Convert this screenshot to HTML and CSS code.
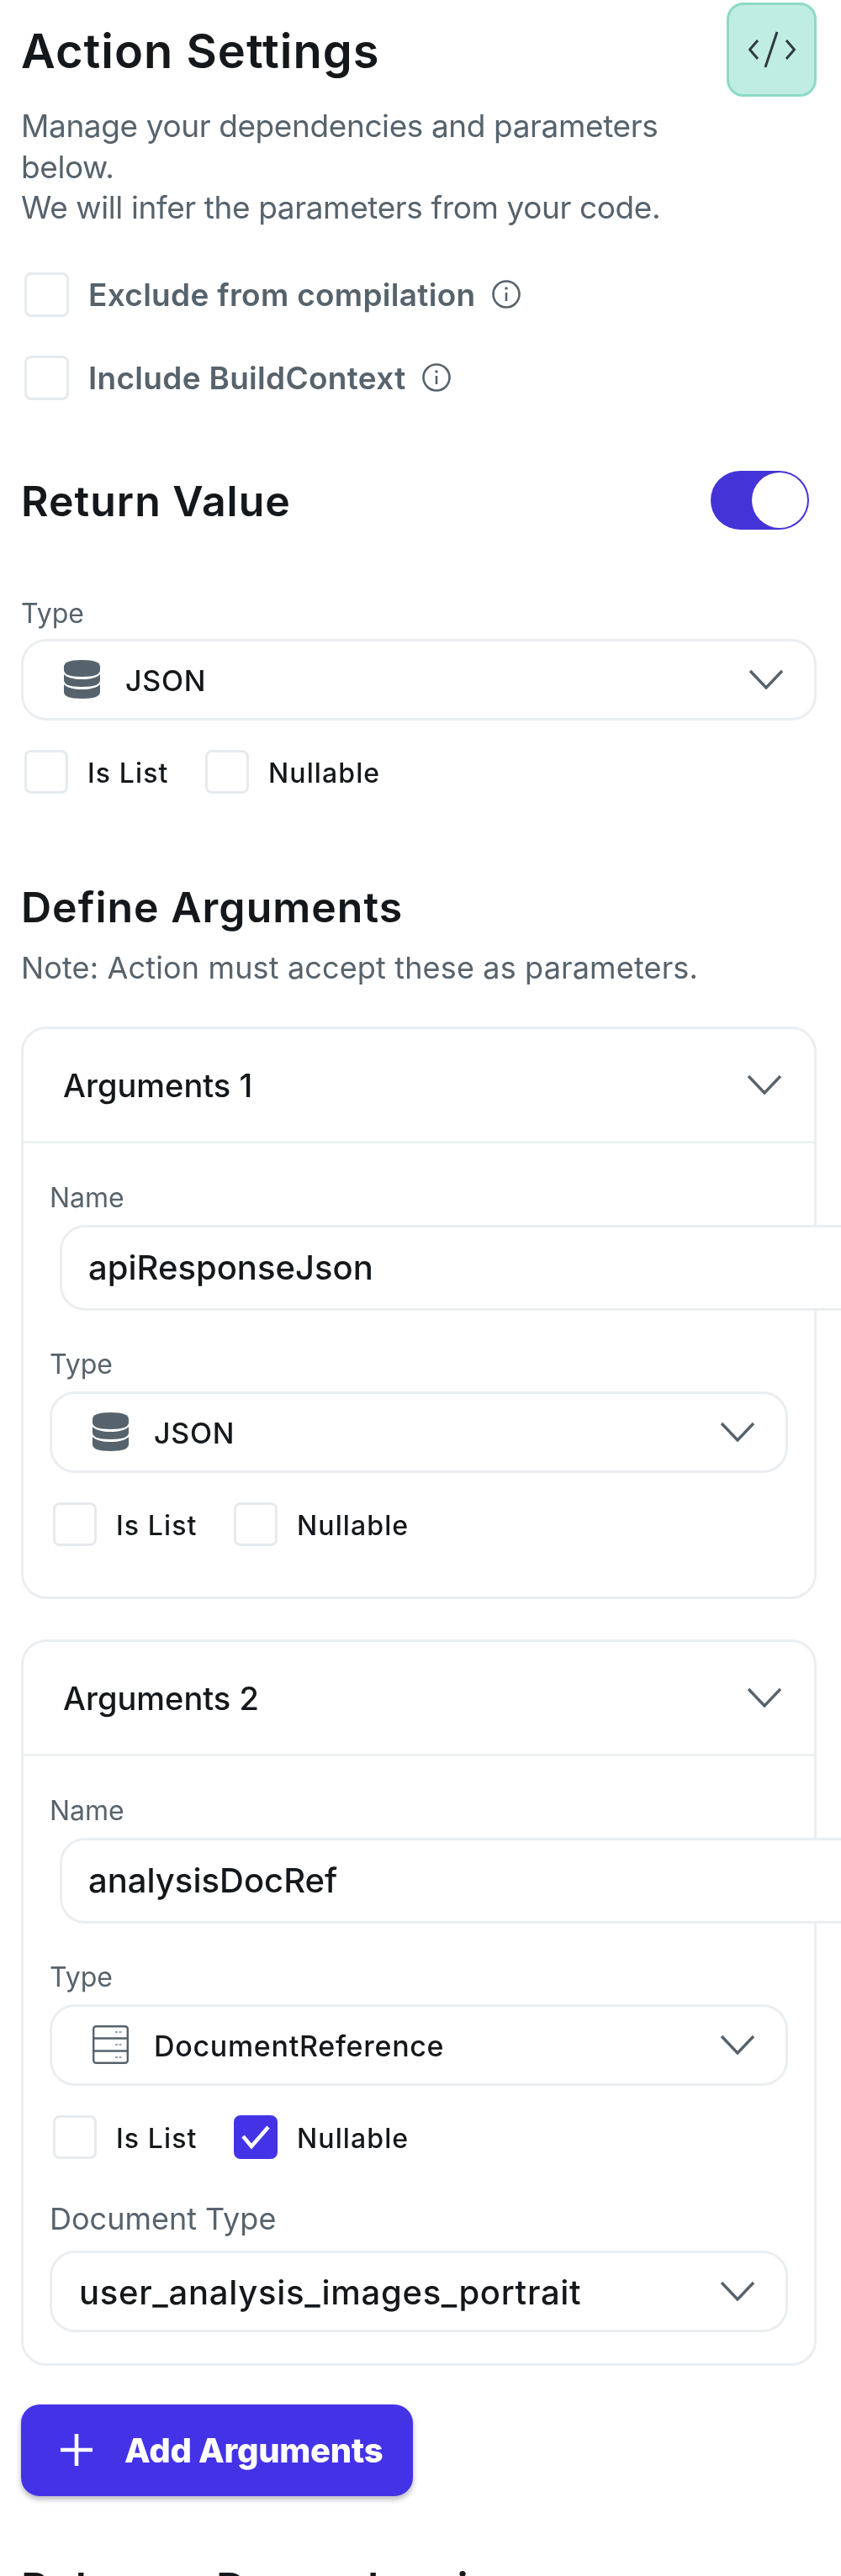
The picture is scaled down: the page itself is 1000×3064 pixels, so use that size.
FILE: index.html
```html
<!DOCTYPE html>
<html lang="en">
<head>
<meta charset="utf-8">
<title>Action Settings</title>
<link rel="stylesheet" href="styles.css">
</head>
<body>
<svg class="defs" width="0" height="0" aria-hidden="true">
  <symbol id="chev" viewBox="0 0 42 24"><polyline points="2,2 21,22 40,2" fill="none" stroke="#57636C" stroke-width="3.4"/></symbol>
  <symbol id="db" viewBox="0 0 43 46">
    <path d="M0 8C0 3 6 0 21.500 0S43 3 43 8V12C43 17 37 20 21.500 20S0 17 0 12Z" fill="#57636C"/>
    <path d="M0 17C4 21 12 23 21.500 23S39 21 43 17V24C43 29 37 32 21.500 32S0 29 0 24Z" fill="#57636C"/>
    <path d="M0 29C4 33 12 35 21.500 35S39 33 43 29V38C43 43 37 46 21.500 46S0 43 0 38Z" fill="#57636C"/>
  </symbol>
  <symbol id="info" viewBox="0 0 36 36">
    <circle cx="18" cy="18" r="15.500" fill="none" stroke="#57636C" stroke-width="2.600"/>
    <path d="M18 16V26" stroke="#57636C" stroke-width="2.600" fill="none"/>
    <circle cx="18" cy="11" r="1.800" fill="#57636C"/>
  </symbol>
</svg>
<main class="page">
  <header class="head-row">
    <h1 class="title">Action Settings</h1>
    <button class="code-btn" type="button" aria-label="Code">
      <svg width="56" height="44" viewBox="0 0 56 44"><path d="M11 11L1.500 22L11 33M45 11L54.500 22L45 33M34 1L20 43" fill="none" stroke="#2f3a40" stroke-width="3"/></svg>
    </button>
  </header>
  <p class="desc">Manage your dependencies and parameters below.<br>We will infer the parameters from your code.</p>

  <div class="check-row first">
    <span class="box"></span><span class="check-label">Exclude from compilation</span>
    <svg class="info"><use href="#info"/></svg>
  </div>
  <div class="check-row second">
    <span class="box"></span><span class="check-label">Include BuildContext</span>
    <svg class="info"><use href="#info"/></svg>
  </div>

  <div class="return-row">
    <h2 class="section">Return Value</h2>
    <span class="toggle"><span class="knob"></span></span>
  </div>

  <div class="field top-field">
    <div class="label">Type</div>
    <div class="select">
      <svg class="type-icon"><use href="#db"/></svg>
      <span class="select-text">JSON</span>
      <svg class="chev"><use href="#chev"/></svg>
    </div>
  </div>
  <div class="opts">
    <span class="box"></span><span class="opt-label list-label">Is List</span>
    <span class="box"></span><span class="opt-label">Nullable</span>
  </div>

  <h2 class="section define">Define Arguments</h2>
  <p class="note">Note: Action must accept these as parameters.</p>

  <section class="card">
    <div class="card-head"><span class="card-title">Arguments 1</span><svg class="chev"><use href="#chev"/></svg></div>
    <div class="card-body">
      <div class="field">
        <div class="label">Name</div>
        <div class="input">apiResponseJson</div>
      </div>
      <div class="field">
        <div class="label">Type</div>
        <div class="select">
          <svg class="type-icon"><use href="#db"/></svg>
          <span class="select-text">JSON</span>
          <svg class="chev"><use href="#chev"/></svg>
        </div>
      </div>
      <div class="opts opts-end">
        <span class="box"></span><span class="opt-label list-label">Is List</span>
        <span class="box"></span><span class="opt-label">Nullable</span>
      </div>
    </div>
  </section>

  <section class="card card-two">
    <div class="card-head"><span class="card-title">Arguments 2</span><svg class="chev"><use href="#chev"/></svg></div>
    <div class="card-body">
      <div class="field">
        <div class="label">Name</div>
        <div class="input">analysisDocRef</div>
      </div>
      <div class="field">
        <div class="label">Type</div>
        <div class="select">
          <svg class="type-icon" viewBox="0 0 43 46">
            <g fill="none" stroke="#57636C" stroke-width="2.400"><rect x="1.200" y="1.200" width="40.600" height="43.600" rx="3"/><path d="M1.200 15.500H41.800M1.200 30.500H41.800"/></g>
            <path d="M27 8H36M27 23H36M27 38H36" stroke="#9aa3aa" stroke-width="2" stroke-dasharray="3 1.500" fill="none"/>
          </svg>
          <span class="select-text">DocumentReference</span>
          <svg class="chev"><use href="#chev"/></svg>
        </div>
      </div>
      <div class="opts">
        <span class="box"></span><span class="opt-label list-label">Is List</span>
        <span class="box box-on">
          <svg width="36" height="30" viewBox="0 0 36 30"><path d="M3 14L13 26L33 3" fill="none" stroke="#fff" stroke-width="4.500"/></svg>
        </span><span class="opt-label">Nullable</span>
      </div>
      <div class="field doc-field">
        <div class="label doc-label">Document Type</div>
        <div class="select">
          <span class="select-text doc-text">user_analysis_images_portrait</span>
          <svg class="chev"><use href="#chev"/></svg>
        </div>
      </div>
    </div>
  </section>

  <button class="add-btn" type="button">
    <svg width="40" height="40" viewBox="0 0 40 40"><path d="M20 1V39M1 20H39" stroke="#fff" stroke-width="4.600" fill="none"/></svg>
    <span>Add Arguments</span>
  </button>

  <h2 class="section pubspec">Pubspec Dependencies</h2>
</main>
</body>
</html>
```

FILE: styles.css
```css
* { box-sizing: border-box; }
html, body { margin: 0; padding: 0; background: #fff; }
body { width: 1000px; height: 3064px; overflow: hidden; font-family: Inter, "Liberation Sans", sans-serif; }
.defs { position: absolute; }
.page { width: 1000px; height: 3064px; overflow: hidden; padding: 3px 29px 0 25px; color: #14181B; filter: blur(0.6px); }

.head-row { display: flex; justify-content: space-between; align-items: center; height: 112px; }
.title { margin: 0; padding-top: 4px; font-size: 56px; font-weight: 600; letter-spacing: 1px; line-height: 64px; }
.code-btn { width: 107px; height: 112px; padding: 0; display: flex; align-items: center; justify-content: center; background: #C0EDE2; border: 3px solid #8CDAC6; border-radius: 20px; }

.desc { margin: 11px 0 0; width: 830px; font-size: 37px; line-height: 48.500px; letter-spacing: -0.4px; color: #57636C; }

.check-row { display: flex; align-items: center; height: 53px; padding-left: 4px; }
.check-row.first { margin-top: 52px; }
.check-row.second { margin-top: 46px; }
.box { flex: none; width: 53px; height: 53px; border: 3px solid #E6EAEE; border-radius: 8px; background: #fff; display: flex; align-items: center; justify-content: center; }
.box-on { background: #4433E6; border-color: #4433E6; }
.check-label { margin-left: 23px; font-size: 37px; font-weight: 600; letter-spacing: 0.3px; color: #57636C; }
.info { width: 36px; height: 36px; margin-left: 18px; }

.return-row { display: flex; justify-content: space-between; align-items: center; height: 72px; margin-top: 84px; padding-right: 9px; }
.section { margin: 0; font-size: 50px; font-weight: 600; letter-spacing: 1px; line-height: 60px; }
.toggle { width: 117px; height: 70px; margin-bottom: 2px; border-radius: 35px; background: #4433D6; display: flex; justify-content: flex-end; align-items: center; padding-right: 2px; }
.knob { width: 66px; height: 66px; border-radius: 50%; background: #fff; }

.field { margin-top: 44px; }
.top-field { margin-top: 78px; }
.label { height: 40px; margin-bottom: 12px; font-size: 32px; line-height: 40px; color: #57636C; }
.top-field .label { margin-bottom: 10px; }
.select { display: flex; align-items: center; height: 97px; padding: 0 36px 0 48px; border: 3px solid #EBEEF1; border-radius: 30px; background: #fff; }
.type-icon { flex: none; width: 43px; height: 46px; }
.select-text { margin-left: 30px; padding-top: 2px; font-size: 34px; font-weight: 500; letter-spacing: 0.7px; color: #14181B; }
.chev { flex: none; width: 42px; height: 24px; margin-left: auto; }

.opts { display: flex; align-items: center; height: 53px; margin-top: 35px; padding-left: 4px; }
.opts .box { width: 52px; height: 52px; }
.opt-label { margin-left: 23px; padding-top: 3px; font-size: 32px; font-weight: 500; letter-spacing: 1.1px; color: #14181B; }
.list-label { width: 140px; }
.opts-end { margin-bottom: 22px; }

.define { margin-top: 104px; }
.note { margin: 18px 0 0; font-size: 36px; line-height: 48px; letter-spacing: 0.15px; color: #57636C; }

.card { margin-top: 46px; border: 3px solid #EBEEF1; border-radius: 30px; background: #fff; }
.card-two { margin-top: 48px; }
.card-head { display: flex; align-items: center; height: 136px; padding: 0 38px 0 47px; border-bottom: 3px solid #EEF1F3; }
.card-title { padding-top: 2px; font-size: 38px; font-weight: 500; color: #14181B; }
.card-body { padding: 45px 31px 37px; }
.card-body .field:first-child { margin-top: 0; }
.input { width: 1000px; height: 102px; margin-left: 12px; padding-left: 31px; display: flex; align-items: center; border: 3px solid #EBEEF1; border-radius: 30px; background: #fff; font-size: 40px; font-weight: 500; color: #14181B; }
.doc-field { margin-top: 50px; }
.doc-label { font-size: 36px; margin-bottom: 18px; }
.select .doc-text { margin-left: -16px; font-size: 40px; letter-spacing: 0.7px; }

.add-btn { display: flex; align-items: center; width: 466px; height: 109px; margin-top: 46px; padding: 0 0 0 46px; border: 0; border-radius: 22px; background: #4433E6; box-shadow: 0 4px 6px rgba(20, 20, 60, 0.3); color: #fff; font-family: inherit; font-size: 40px; font-weight: 800; letter-spacing: -0.3px; }
.add-btn span { margin-left: 37px; }
.pubspec { margin-top: 79px; }
```
